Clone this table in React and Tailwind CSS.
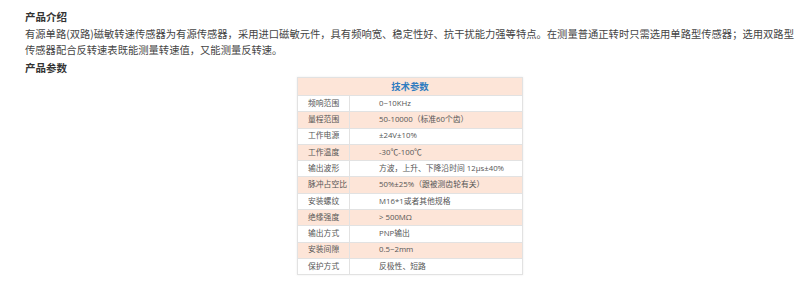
import React from 'react';

const specs = [
  ['频响范围', '0~10KHz'],
  ['量程范围', '50-10000（标准60个齿）'],
  ['工作电源', '±24V±10%'],
  ['工作温度', '-30℃-100℃'],
  ['输出波形', '方波，上升、下降沿时间 12μs±40%'],
  ['脉冲占空比', '50%±25%（跟被测齿轮有关）'],
  ['安装螺纹', 'M16*1或者其他规格'],
  ['绝缘强度', '> 500MΩ'],
  ['输出方式', 'PNP输出'],
  ['安装间隙', '0.5~2mm'],
  ['保护方式', '反极性、短路'],
];

export default function App() {
  return (
    <div className="min-h-screen bg-white font-['Noto_Sans_CJK_SC',sans-serif]">
      <div className="w-[770px] ml-[25px] pt-[9px]">
        {/* 产品介绍 */}
        <h2 className="text-[10.5px] leading-[16px] font-bold text-[#333]">产品介绍</h2>
        <p className="mt-[1px] text-[10.3px] leading-[15.5px] text-[#444]">
          有源单路(双路)磁敏转速传感器为有源传感器，采用进口磁敏元件，具有频响宽、稳定性好、抗干扰能力强等特点。在测量普通正转时只需选用单路型传感器；选用双路型传感器配合反转速表既能测量转速值，又能测量反转速。
        </p>
        <h2 className="mt-[3px] text-[10.5px] leading-[16px] font-bold text-[#333]">产品参数</h2>

        {/* 技术参数 table */}
        <div className="mt-[1px] mx-auto w-[226px] border border-[#e2e2e2] shadow-[0_0_2px_rgba(0,0,0,0.08)] text-[7.8px] text-[#555] font-['Open_Sans','Noto_Sans_CJK_SC',sans-serif]">
          <div className="h-[17px] bg-[#fde5d8] flex items-center justify-center text-[9.4px] font-bold text-[#2f7cc0] font-['Noto_Sans_CJK_SC',sans-serif]">
            技术参数
          </div>
          {specs.map(([label, value], i) => (
            <div
              key={label}
              className={`h-[16.3px] flex border-t border-[#e2e2e2] ${i % 2 === 1 ? 'bg-[#fde5d8]' : 'bg-white'}`}
            >
              <div className="w-[52px] shrink-0 pl-[10px] flex items-center border-r border-[#e2e2e2] whitespace-nowrap">
                {label}
              </div>
              <div className="pl-[29px] flex items-center whitespace-nowrap">{value}</div>
            </div>
          ))}
        </div>
      </div>
    </div>
  );
}
